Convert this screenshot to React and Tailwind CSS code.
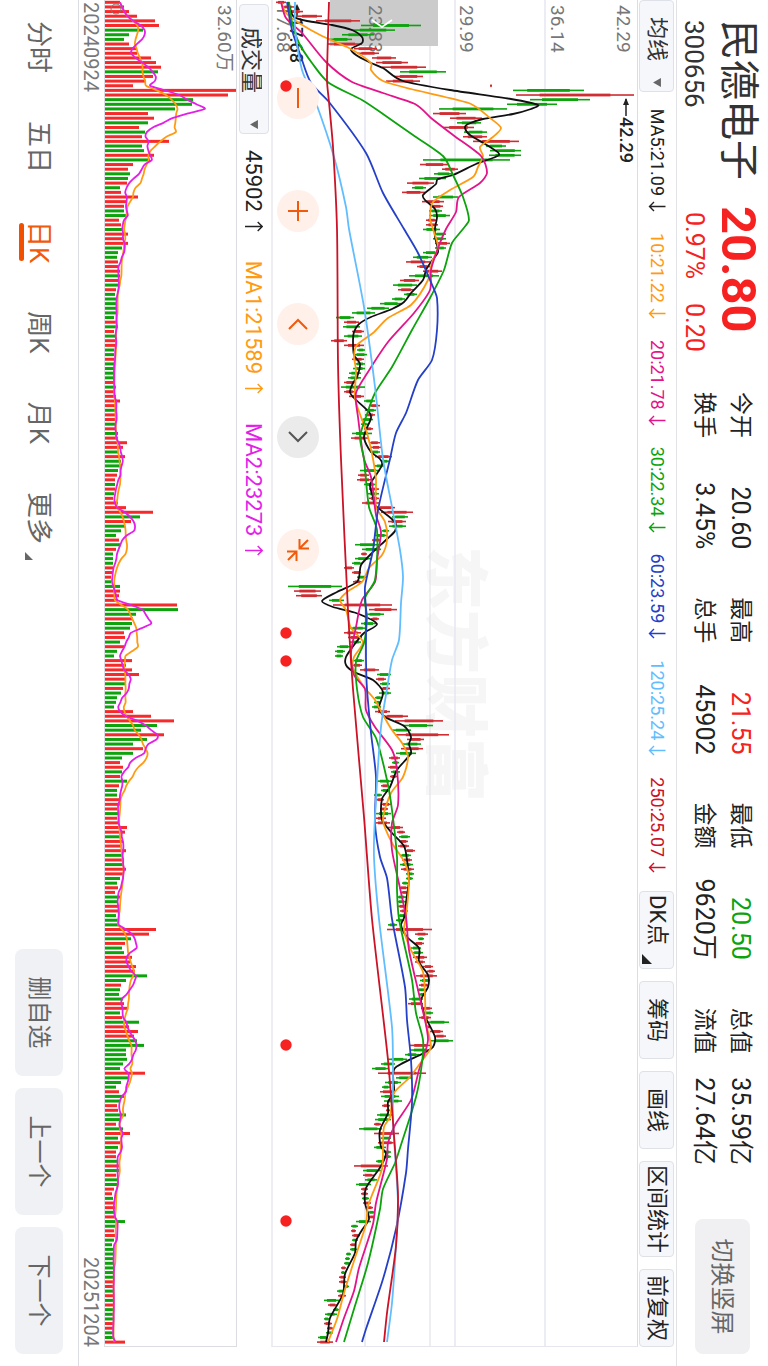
import React, { useState } from "react";

const STEP = 4.636;
const FIRST = 2.3;
const PRICE_H = 363;
const VOL_H = 131;

const xOf = (i) => FIRST + i * STEP;

// daily volume, positive = up day, negative = down day
const volumes = [
  15, 19, 24, 32, 50, 54, -38, -24, -19, 24, 32, 32, 46, 51, 56, -53, 48, 41, 28, 131,
  123, -88, -87, -70, 43, 49, -43, 34, -40, 37, 64, -37, -39, 49, -45, 28, 23, -25, -23, 22,
  -15, 16, 33, 22, 19, -19, -21, 14, 16, -17, 23, 19, 23, -17, -13, -12, 13, 13, 15, -15,
  13, -13, 11, -10, -11, -12, -13, -12, -9, 12, -13, 9, -10, 12, 11, -9, -9, 9, -9, -9,
  -9, -9, 9, -11, 9, 11, 15, 11, -10, 11, 11, -10, 10, -13, 13, 22, 18, -13, 20, -16,
  -16, -13, 12, 10, -10, 10, -9, 8, 13, 21, 48, -35, 26, -20, -16, -11, 14, -16, 11, -8,
  -8, -8, 8, 7, 6, -6, -15, 15, 14, 13, 72, -73, -31, 28, -27, -25, 19, 20, -15, 19,
  -12, -9, 27, 21, 27, 34, 20, -20, 18, -16, -12, -11, -9, 28, 46, 69, -52, -36, 59, -42,
  -28, 38, -28, -17, 15, 18, -17, 15, -22, 14, -12, -12, 14, 15, 12, -14, 12, 15, 22, 20,
  -15, 18, 17, 21, -17, 18, -18, 21, 18, -15, -12, 13, 10, -15, -13, 15, 15, -11, -14, -14,
  51, 44, -26, 20, -17, -19, 27, 25, 31, 30, -42, -21, 16, -15, -14, -18, 19, 22, -15, 17,
  -34, 24, 33, 29, -32, -39, -21, -21, -22, -18, -15, 40, -24, -16, -11, 14, -19, -15, 12, 13,
  -21, -15, 11, -18, 25, -13, 16, -13, 11, 11, -12, 15, -14, 11, -13, -12, 9, 7, -8, 10,
  10, -11, 11, -20, -11, 9, 10, -9, -7, -9, -9, -9, -9, -9, -8, -9, 9, 8, -9, 9,
  -9, 9, -8, -8, -9, 8, 8, -8, -9, 20,
];

// [from, to] of every day: from < to is a rise, from > to is a fall
const candles = [
  [2, 12], [8, 20], [12, 29], [23, 48], [42, 86], [147, 87], [121, 77], [100, 68], [78, 55], [53, 88],
  [80, 103], [83, 105], [98, 122], [102, 134], [108, 152], [172, 126], [120, 149], [112, 146], [216, 218], [310, 239],
  [242, 360], [316, 256], [283, 233], [233, 165], [159, 192], [176, 208], [207, 183], [169, 200], [213, 190], [189, 213],
  [199, 245], [232, 212], [247, 216], [247, 215], [236, 149], [146, 175], [168, 184], [179, 160], [172, 145], [133, 160],
  [152, 138], [128, 151], [184, 159], [148, 170], [156, 169], [168, 155], [176, 155], [152, 163], [152, 164], [166, 149],
  [172, 160], [172, 159], [161, 176], [172, 161], [164, 149], [158, 139], [132, 156], [143, 156], [149, 168], [165, 135],
  [126, 145], [143, 119], [124, 140], [143, 130], [131, 118], [128, 106], [115, 93], [101, 78], [80, 62], [70, 85],
  [86, 69], [78, 90], [88, 70], [57, 73], [70, 90], [91, 83], [93, 80], [78, 90], [91, 81], [91, 79],
  [87, 75], [87, 74], [70, 82], [91, 67], [70, 81], [75, 90], [101, 90], [95, 106], [102, 91], [91, 101],
  [99, 87], [94, 87], [90, 99], [98, 78], [77, 95], [95, 106], [97, 107], [106, 96], [101, 118], [115, 107],
  [110, 101], [106, 86], [84, 95], [83, 98], [102, 90], [95, 105], [105, 94], [95, 105], [88, 106], [102, 121],
  [107, 139], [134, 118], [114, 132], [132, 115], [115, 108], [113, 101], [98, 107], [106, 81], [107, 88], [87, 93],
  [97, 81], [88, 78], [70, 80], [78, 87], [93, 83], [79, 88], [68, 14], [20, 47], [22, 48], [70, 55],
  [59, 118], [95, 123], [110, 92], [97, 105], [102, 87], [92, 76], [70, 87], [74, 88], [87, 76], [77, 63],
  [71, 61], [69, 61], [90, 79], [78, 88], [86, 105], [117, 103], [102, 112], [116, 106], [107, 116], [117, 105],
  [108, 101], [107, 100], [107, 98], [101, 116], [108, 134], [121, 169], [159, 129], [137, 118], [121, 175], [133, 150],
  [147, 129], [127, 149], [142, 122], [115, 126], [125, 118], [114, 124], [126, 117], [116, 123], [118, 103], [107, 115],
  [116, 107], [108, 100], [102, 110], [107, 117], [106, 114], [117, 102], [102, 112], [101, 116], [114, 129], [123, 131],
  [136, 125], [125, 134], [124, 135], [131, 141], [137, 126], [128, 138], [139, 126], [127, 140], [140, 132], [139, 132],
  [134, 128], [125, 134], [127, 134], [132, 123], [132, 123], [124, 132], [126, 134], [132, 124], [130, 122], [123, 114],
  [113, 158], [141, 154], [150, 144], [140, 150], [147, 137], [149, 138], [139, 153], [141, 151], [149, 159], [153, 161],
  [142, 163], [156, 146], [145, 155], [152, 143], [152, 145], [149, 135], [134, 149], [147, 158], [159, 150], [145, 157],
  [175, 152], [152, 157], [156, 169], [160, 172], [179, 157], [136, 157], [156, 136], [145, 131], [133, 114], [121, 107],
  [115, 98], [104, 152], [138, 122], [127, 111], [116, 108], [106, 121], [125, 107], [128, 110], [108, 116], [112, 116],
  [118, 103], [117, 101], [100, 107], [108, 85], [100, 125], [117, 107], [104, 121], [112, 100], [117, 109], [117, 110],
  [110, 102], [80, 114], [107, 89], [89, 100], [103, 91], [97, 82], [87, 94], [87, 94], [95, 88], [89, 97],
  [92, 99], [101, 94], [95, 101], [97, 82], [84, 77], [77, 82], [78, 86], [84, 78], [76, 82], [83, 76],
  [77, 72], [76, 71], [76, 70], [67, 72], [71, 67], [65, 72], [65, 73], [75, 69], [71, 63], [64, 72],
  [65, 50], [54, 63], [65, 59], [63, 51], [55, 50], [50, 58], [53, 59], [59, 52], [54, 44], [43, 59],
];

const ma250 = [[2, 55], [80, 53], [102, 55], [147, 59], [229, 63], [363, 64], [459, 67], [610, 74], [689, 79], [817, 90], [919, 98], [1060, 114], [1149, 121], [1196, 124], [1246, 122], [1313, 113], [1342, 110]];
const ma120 = [[2, 21], [27, 21], [70, 28], [103, 42], [157, 60], [207, 72], [229, 75], [307, 90], [387, 101], [459, 109], [507, 118], [550, 126], [577, 129], [603, 127], [640, 125], [660, 118], [689, 113], [727, 107], [817, 101], [857, 100], [919, 105], [1027, 118], [1070, 119], [1120, 119], [1203, 124], [1246, 122], [1303, 118], [1342, 113]];
const ma60 = [[2, 13], [30, 18], [57, 27], [83, 37], [102, 55], [153, 92], [193, 109], [229, 130], [253, 144], [287, 159], [298, 163], [330, 163], [360, 158], [380, 144], [413, 132], [433, 122], [459, 116], [510, 104], [550, 99], [587, 91], [610, 92], [660, 92], [689, 93], [733, 97], [777, 102], [823, 101], [857, 106], [878, 113], [919, 118], [987, 131], [1020, 133], [1060, 137], [1103, 138], [1149, 134], [1173, 132], [1229, 122], [1279, 109], [1329, 92], [1342, 88]];
const ma30 = [[2, 15], [22, 18], [43, 25], [63, 38], [83, 55], [100, 88], [114, 109], [135, 139], [156, 169], [175, 179], [197, 189], [220, 195], [229, 189], [243, 178], [270, 170], [298, 156], [330, 138], [367, 118], [393, 101], [417, 92], [437, 86], [459, 90], [507, 95], [530, 103], [580, 101], [598, 91], [617, 93], [643, 90], [662, 82], [689, 83], [717, 89], [738, 102], [780, 113], [810, 118], [857, 123], [890, 123], [919, 125], [980, 138], [1013, 142], [1040, 149], [1063, 148], [1097, 142], [1148, 126], [1163, 121], [1189, 109], [1209, 106], [1263, 94], [1309, 80], [1342, 70]];
const ma20 = [[2, 7], [18, 12], [33, 28], [62, 52], [82, 78], [93, 109], [104, 141], [118, 157], [135, 179], [156, 207], [173, 213], [183, 206], [197, 185], [212, 182], [229, 172], [248, 164], [270, 157], [290, 156], [313, 140], [342, 114], [372, 94], [393, 82], [417, 84], [459, 90], [477, 97], [515, 102], [532, 107], [560, 103], [582, 101], [600, 88], [627, 82], [653, 77], [675, 80], [689, 91], [710, 92], [727, 101], [750, 118], [770, 123], [805, 124], [823, 118], [850, 118], [888, 126], [917, 132], [950, 135], [1003, 147], [1040, 154], [1070, 145], [1100, 137], [1125, 121], [1143, 114], [1159, 113], [1203, 102], [1224, 99], [1268, 85], [1291, 80], [1318, 70], [1342, 62]];
const ma10 = [[2, 7], [13, 12], [23, 25], [36, 48], [48, 75], [63, 97], [70, 97], [81, 109], [89, 137], [97, 171], [104, 197], [118, 216], [128, 227], [137, 219], [147, 206], [156, 209], [167, 204], [177, 199], [190, 176], [202, 159], [218, 156], [229, 159], [247, 164], [262, 158], [280, 154], [305, 137], [318, 114], [333, 99], [345, 83], [356, 80], [370, 82], [398, 81], [417, 87], [433, 93], [459, 99], [480, 102], [507, 102], [522, 111], [540, 113], [555, 108], [568, 95], [582, 88], [592, 73], [600, 66], [610, 72], [628, 77], [642, 89], [657, 80], [668, 79], [687, 90], [700, 101], [715, 109], [730, 118], [743, 128], [757, 134], [777, 129], [793, 117], [820, 109], [843, 118], [863, 131], [880, 135], [917, 132], [930, 130], [950, 137], [972, 149], [997, 151], [1023, 152], [1047, 157], [1058, 150], [1078, 135], [1093, 120], [1117, 116], [1127, 110], [1148, 109], [1169, 108], [1206, 94], [1224, 92], [1261, 80], [1293, 70], [1319, 63], [1342, 54]];
const ma5 = [[2, 14], [8, 16], [17, 20], [21, 33], [25, 58], [30, 78], [37, 88], [43, 88], [49, 77], [55, 82], [62, 95], [68, 109], [81, 129], [90, 176], [99, 237], [105, 264], [109, 257], [114, 239], [119, 209], [124, 194], [128, 191], [135, 196], [147, 216], [155, 225], [164, 202], [175, 179], [179, 164], [184, 162], [195, 149], [200, 151], [209, 161], [217, 163], [228, 161], [237, 161], [252, 164], [262, 157], [270, 152], [280, 149], [293, 137], [302, 130], [309, 118], [317, 97], [324, 85], [332, 80], [340, 79], [355, 80], [364, 86], [377, 83], [383, 79], [392, 76], [398, 80], [412, 95], [418, 97], [430, 92], [438, 90], [452, 97], [459, 106], [465, 108], [475, 102], [485, 96], [497, 99], [505, 101], [522, 121], [531, 121], [539, 113], [554, 97], [565, 87], [582, 83], [592, 63], [601, 48], [607, 59], [613, 82], [624, 103], [633, 90], [645, 80], [657, 72], [665, 72], [672, 80], [680, 99], [692, 109], [708, 105], [717, 111], [726, 130], [737, 137], [744, 135], [753, 137], [770, 123], [787, 116], [799, 108], [820, 108], [833, 118], [846, 130], [860, 133], [880, 135], [895, 133], [918, 130], [925, 127], [937, 133], [948, 145], [962, 145], [975, 154], [987, 154], [1000, 147], [1018, 152], [1037, 161], [1047, 159], [1053, 150], [1068, 121], [1092, 120], [1102, 114], [1113, 114], [1130, 106], [1147, 107], [1153, 112], [1166, 107], [1188, 92], [1203, 91], [1219, 95], [1230, 88], [1241, 82], [1253, 81], [1274, 71], [1294, 69], [1318, 56], [1333, 54], [1342, 52]];

const priceLines = [
  { color: "#111111", points: ma5 },
  { color: "#ff9b12", points: ma10 },
  { color: "#e3148a", points: ma20 },
  { color: "#0ca30c", points: ma30 },
  { color: "#2540c8", points: ma60 },
  { color: "#62bdff", points: ma120 },
  { color: "#cc1226", points: ma250 },
];

const averages = [
  { text: "MA5:21.09", className: "text-[#222222]" },
  { text: "10:21.22", className: "text-[#ff9b12]" },
  { text: "20:21.78", className: "text-[#e3148a]" },
  { text: "30:22.34", className: "text-[#0ca30c]" },
  { text: "60:23.59", className: "text-[#2540c8]" },
  { text: "120:25.24", className: "text-[#62bdff]" },
  { text: "250:25.07", className: "text-[#cc1226]" },
];

const stats = [
  { label: "今开", value: "20.60" },
  { label: "最高", value: "21.55", className: "text-[#f62222]" },
  { label: "最低", value: "20.50", className: "text-[#0ca30c]" },
  { label: "总值", value: "35.59亿" },
  { label: "换手", value: "3.45%" },
  { label: "总手", value: "45902" },
  { label: "金额", value: "9620万" },
  { label: "流值", value: "27.64亿" },
];

const periods = ["分时", "五日", "日K", "周K", "月K", "更多"];

// rounds the corners of a line a little
const curve = (points, height) => {
  const p = points.map(([x, h]) => [x, height - h]);
  let d = `M${p[0][0]} ${p[0][1]}`;
  for (let i = 0; i < p.length - 1; i++) {
    const a = p[i - 1] || p[i];
    const b = p[i];
    const c = p[i + 1];
    const e = p[i + 2] || c;
    const k = Math.min(1, (c[0] - b[0]) / (c[0] - a[0] || 1)) / 4;
    const m = Math.min(1, (c[0] - b[0]) / (e[0] - b[0] || 1)) / 4;
    d += `C${b[0] + (c[0] - a[0]) * k} ${b[1] + (c[1] - a[1]) * k} ${c[0] - (e[0] - b[0]) * m} ${c[1] - (e[1] - b[1]) * m} ${c[0]} ${c[1]}`;
  }
  return d;
};

const average = (days) =>
  volumes.map((v, i) => {
    const part = volumes.slice(Math.max(0, i - days + 1), i + 1);
    return [xOf(i), part.reduce((sum, n) => sum + Math.abs(n), 0) / part.length];
  });

const Arrow = ({ up }) => (
  <svg width="13" height="18" viewBox="0 0 13 18" fill="none" stroke="currentColor" strokeWidth="1.4" aria-hidden="true">
    <path d={up ? "M6.5 18V.8M2 5.3L6.5 .8L11 5.3" : "M6.5 .5V16.5M2 12L6.5 16.5L11 12"} />
  </svg>
);

const Picker = ({ label, options, className, pad = "pl-4" }) => (
  <div className={"relative rounded border border-[#dfe1e8] bg-[#f6f7fa] " + className}>
    <select
      aria-label={label}
      className={"h-full w-full appearance-none bg-transparent text-[22px] leading-none text-[#333333] outline-none " + pad}
    >
      {options.map((o) => (
        <option key={o}>{o}</option>
      ))}
    </select>
    <svg className="pointer-events-none absolute right-1 top-1/2 -translate-y-1/2" width="9" height="8" viewBox="0 0 8 7" aria-hidden="true">
      <path d="M0 0H8L4 7Z" fill="#666666" />
    </svg>
  </div>
);

const ToolButton = ({ children, corner }) => (
  <button
    type="button"
    className={
      "relative h-[35px] min-w-[78px] rounded border border-[#dfe1e8] bg-[#f6f7fa] px-[3px] text-[22px] leading-none whitespace-nowrap text-[#222222] " +
      (corner ? "text-left" : "text-center")
    }
  >
    {children}
    {corner && (
      <svg className="absolute right-1 bottom-0.5" width="10" height="10" viewBox="0 0 10 10" aria-hidden="true">
        <path d="M10 0V10H0Z" fill="#222222" />
      </svg>
    )}
  </button>
);

const RoundButton = ({ label, d, off }) => (
  <button
    type="button"
    aria-label={label}
    className={"size-[42px] rounded-full " + (off ? "bg-[#ebebeb] text-[#555555]" : "bg-[#fff0e9] text-[#f05a0a]")}
  >
    <svg viewBox="0 0 42 42" fill="none" stroke="currentColor" strokeWidth="2" aria-hidden="true">
      <path d={d} />
    </svg>
  </button>
);

const Header = () => (
  <header className="flex h-[92px] items-center border-b border-[#e2e3e6] pr-3 pl-5">
    <div className="grid w-[372px] grid-cols-[186px_1fr] items-center">
      <h1 className="text-[40px] leading-[56px] text-[#333333]">民德电子</h1>
      <p className="text-[49px] leading-[56px] font-bold text-[#f62222]">20.80</p>
      <p className="text-[26px] leading-8 text-[#333333]">300656</p>
      <p className="flex gap-6 pl-1.5 text-[25px] leading-8 text-[#f62222]">
        <span>0.97%</span>
        <span>0.20</span>
      </p>
    </div>
    <dl className="grid flex-1 grid-cols-4 gap-x-12 pr-[54px] text-[#222222]">
      {stats.map((s) => (
        <div key={s.label} className="flex items-center justify-between leading-9 whitespace-nowrap">
          <dt className="text-[23px]">{s.label}</dt>
          <dd className={"text-[25px] " + (s.className || "")}>{s.value}</dd>
        </div>
      ))}
    </dl>
    <button type="button" className="h-[55px] w-[135px] rounded-lg bg-[#f0f0f3] text-2xl text-[#666666]">
      切换竖屏
    </button>
  </header>
);

const PriceChart = () => (
  <div className="relative border-t border-b-2 border-r border-t-[#dcdde3] border-r-[#e6e7ee] border-b-[#ededf2]">
    <svg className="block w-full" viewBox="0 0 1346 364" role="img" aria-label="日K线">
      <text x="546" y="204" fontSize="64" fontWeight="900" fill="#f6f6f6">东方财富</text>
      <path d="M0 92H1346M0 182H1346M0 272H1346" stroke="#e6e6f2" strokeWidth="1.5" />
      <path d="M0 207H1346" stroke="#dddde3" strokeWidth="1" />
      <rect x="0" y="199" width="46" height="108" fill="#cbcbcb" />

      <g fontSize="19" fill="#777777">
        <text x="5" y="20">42.29</text>
        <text x="5" y="86">36.14</text>
        <text x="5" y="177">29.99</text>
        <text x="5" y="268">23.83</text>
        <text x="5" y="360">17.68</text>
      </g>
      <g fontSize="18" fontWeight="500" fill="#222222">
        <text x="117" y="17">42.29</text>
        <text x="17" y="347">17.68</text>
      </g>
      <path d="M116 11H99" stroke="#222222" strokeWidth="1.5" />
      <path d="M98 11L105 8V14Z" fill="#222222" />
      <path d="M17 340H6" stroke="#222222" strokeWidth="1.5" />
      <path d="M4 340L10 337V343Z" fill="#222222" />

      {candles.map(([from, to], i) => {
        const size = Math.abs(to - from);
        const y = PRICE_H - Math.max(from, to);
        const color = to > from ? "#cf2d32" : "#0ca30c";
        return (
          <g key={i} fill={color}>
            <rect x={xOf(i) - 0.8} y={y} width="1.6" height={size} />
            <rect x={xOf(i) - 1.4} y={y + size * 0.2} width="2.8" height={size * 0.6} />
          </g>
        );
      })}

      {priceLines.map((line) => (
        <path key={line.color} d={curve(line.points, PRICE_H)} fill="none" stroke={line.color} strokeWidth="1.8" strokeLinejoin="round" />
      ))}
      <path d="M20 265L27 255L20 245" fill="none" stroke="#ffffff" strokeWidth="1.8" />
    </svg>

    <div className="absolute bottom-1 left-[77px] flex gap-[71px]">
      <RoundButton label="缩小" d="M11 21H31" />
      <RoundButton label="放大" d="M11 21H31M21 11V31" />
      <RoundButton label="向左" d="M26 12L17 21L26 30" />
      <RoundButton label="向右" d="M16 12L25 21L16 30" off />
      <RoundButton label="收起" d="M10 19.5H19.5V10M19.5 19.5L11 11M32 22.5H22.5V32M22.5 22.5L31 31" />
    </div>

    <svg className="pointer-events-none absolute inset-0 block w-full" viewBox="0 0 1346 364" aria-hidden="true">
      {[86, 633, 661, 1045, 1221].map((x) => (
        <circle key={x} cx={x} cy="351" r="5.7" fill="#f62222" />
      ))}
    </svg>
  </div>
);

const VolumeChart = () => (
  <div className="border-y border-r border-[#dcdde3]">
    <svg className="block w-full" viewBox="0 0 1346 131" role="img" aria-label="成交量">
      <text x="5" y="18" fontSize="19" fill="#777777">32.60万</text>
      {volumes.map((v, i) => (
        <rect
          key={i}
          x={xOf(i) - 1.5}
          y={VOL_H - Math.abs(v)}
          width="3"
          height={Math.abs(v)}
          fill={v > 0 ? "#f62a2a" : "#0ca30c"}
        />
      ))}
      <circle cx="9" cy="120" r="5" fill="none" stroke="#777777" strokeWidth="1" />
      <path d={curve(average(10), VOL_H)} fill="none" stroke="#ff9b12" strokeWidth="1.8" />
      <path d={curve(average(5), VOL_H)} fill="none" stroke="#e31fe8" strokeWidth="1.8" />
    </svg>
  </div>
);

const Footer = () => {
  const [period, setPeriod] = useState("日K");

  return (
    <footer className="flex flex-1 items-center justify-between border-t border-[#dcdde3] pr-3 pl-[21px]">
      <nav className="flex gap-12">
        {periods.map((p) => (
          <button
            key={p}
            type="button"
            onClick={() => setPeriod(p)}
            className={"relative py-1 text-[26px] leading-8 " + (p === period ? "text-[#f05a0a]" : "text-[#666666]")}
          >
            {p}
            {p === period && <span className="absolute inset-x-0.5 bottom-0 h-[5px] rounded-full bg-[#f05000]" />}
            {p === "更多" && (
              <svg className="absolute bottom-1.5 left-full ml-2" width="8" height="8" viewBox="0 0 8 8" aria-hidden="true">
                <path d="M8 0V8H0Z" fill="#666666" />
              </svg>
            )}
          </button>
        ))}
      </nav>
      <div className="flex gap-3">
        {["删自选", "上一个", "下一个"].map((b) => (
          <button key={b} type="button" className="h-12 w-[127px] rounded-lg bg-[#f0f1f4] text-2xl text-[#666666]">
            {b}
          </button>
        ))}
      </div>
    </footer>
  );
};

// the page is always shown in landscape, turned on a portrait screen
const App = () => {
  return (
    <div className="relative h-screen w-screen overflow-hidden bg-white">
      <div className="absolute top-0 left-full flex h-[100vw] w-[100vh] origin-top-left rotate-90 flex-col bg-white font-['Roboto','Noto_Sans_CJK_SC',sans-serif]">
        <Header />

        <main className="pr-[19px]">
          <div className="flex h-[38px] items-center justify-between">
            <Picker label="指标" options={["均线"]} className="h-[35px] w-[92px]" />
            <div className="flex gap-5 text-lg whitespace-nowrap">
              {averages.map((a) => (
                <span key={a.text} className={"flex items-center gap-1 " + a.className}>
                  {a.text}
                  <Arrow />
                </span>
              ))}
            </div>
            <div className="flex gap-3">
              <ToolButton corner>DK点</ToolButton>
              <ToolButton>筹码</ToolButton>
              <ToolButton>画线</ToolButton>
              <ToolButton>区间统计</ToolButton>
              <ToolButton>前复权</ToolButton>
            </div>
          </div>

          <PriceChart />

          <div className="flex h-[34px] items-center gap-4 pl-1 text-[22px] whitespace-nowrap">
            <Picker label="副图指标" options={["成交量"]} className="h-[30px] w-[130px]" pad="pl-[22px]" />
            <div className="flex gap-7">
              <span className="flex items-center gap-2 text-[#222222]">45902<Arrow up /></span>
              <span className="flex items-center gap-2 text-[#ff9b12]">MA1:21589<Arrow up /></span>
              <span className="flex items-center gap-2 text-[#e31fe8]">MA2:23273<Arrow up /></span>
            </div>
          </div>

          <VolumeChart />

          <div className="flex h-[25px] items-center justify-between pl-0.5 text-xl text-[#777777]">
            <span>20240924</span>
            <span>20251204</span>
          </div>
        </main>

        <Footer />
      </div>
    </div>
  );
};

export default App;
